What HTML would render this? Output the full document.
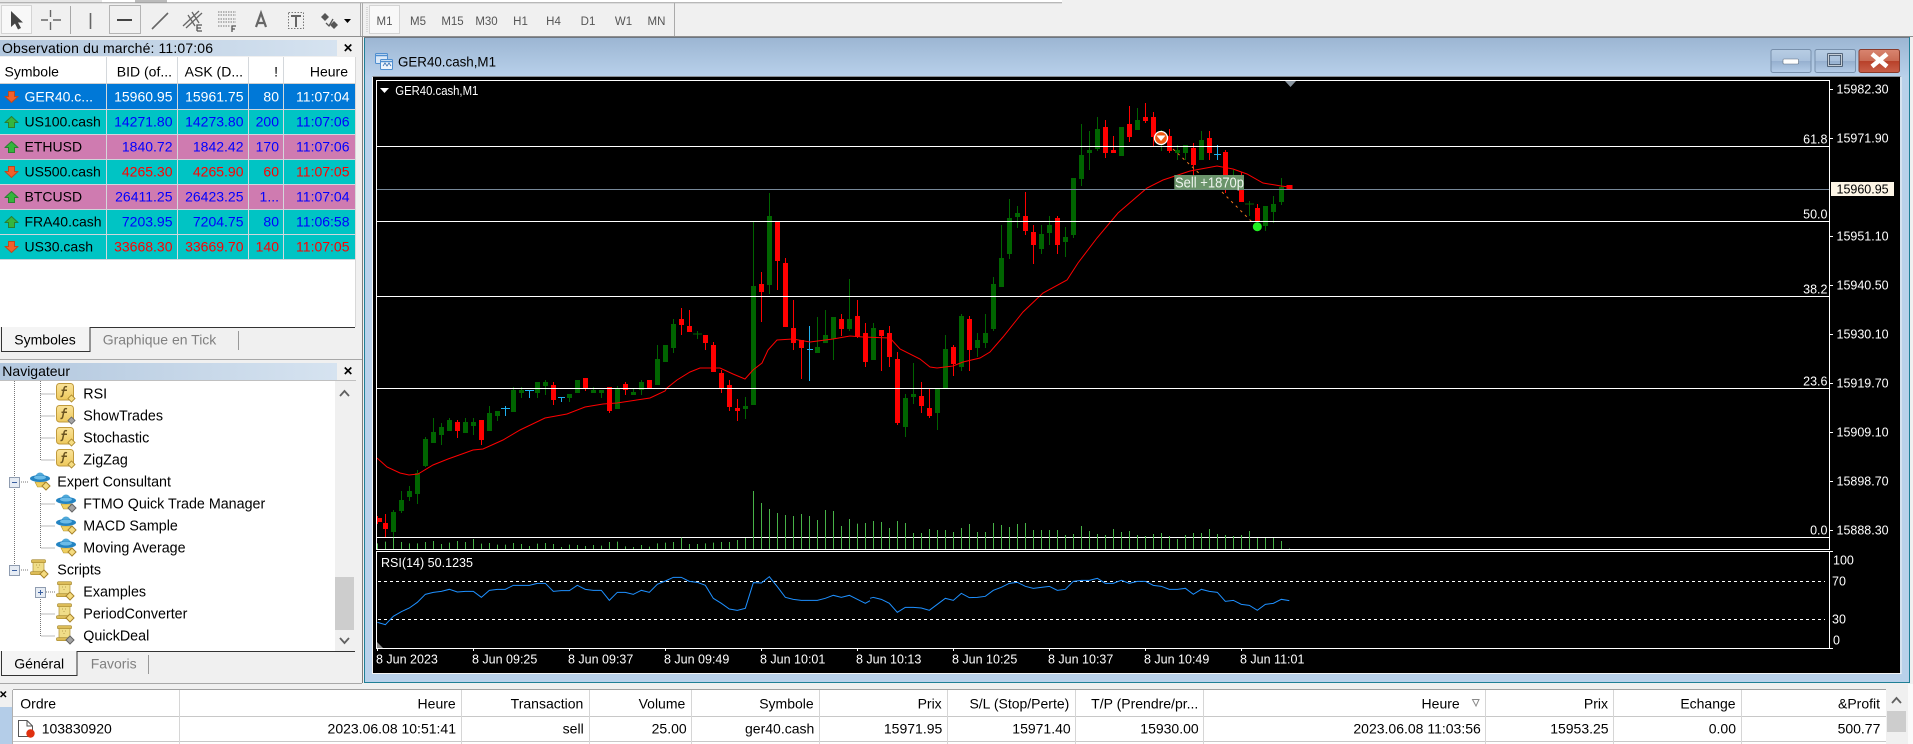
<!DOCTYPE html>
<html lang="fr"><head><meta charset="utf-8"><title>GER40.cash,M1</title>
<style>
html,body{margin:0;padding:0;width:1913px;height:744px;overflow:hidden;background:#f0f0f0}
svg{display:block;position:absolute;left:0;top:0}
text{font-family:"Liberation Sans",sans-serif;font-size:14px;fill:#000}
.r{text-anchor:end}.w{fill:#fff}.b{fill:#00f}.d{fill:#f00}
.g{fill:#808080}.p{font-size:11.5px;fill:#555;text-anchor:middle}
.c{font-size:12.5px;fill:#fff}.n{font-size:14.3px}
.v{vector-effect:non-scaling-stroke}
</style></head><body>
<svg width="1913" height="744" viewBox="0 0 1913 744" xmlns="http://www.w3.org/2000/svg">
<defs>
<linearGradient id="tb" x1="0" y1="0" x2="0" y2="1"><stop offset="0" stop-color="#9cb6d3"/><stop offset="1" stop-color="#b8d0ea"/></linearGradient>
<linearGradient id="cap" x1="0" y1="0" x2="1" y2="0"><stop offset="0" stop-color="#b2c7de"/><stop offset="1" stop-color="#d6e3f0"/></linearGradient>
<linearGradient id="btn" x1="0" y1="0" x2="0" y2="1"><stop offset="0" stop-color="#b8cde4"/><stop offset=".5" stop-color="#a9c1dc"/><stop offset=".51" stop-color="#96b0cf"/><stop offset="1" stop-color="#b5cde8"/></linearGradient>
<linearGradient id="cl" x1="0" y1="0" x2="0" y2="1"><stop offset="0" stop-color="#d98570"/><stop offset=".5" stop-color="#c96b54"/><stop offset=".51" stop-color="#b8412a"/><stop offset="1" stop-color="#c9604a"/></linearGradient>
<linearGradient id="gy" x1="0" y1="0" x2="0" y2="1"><stop offset="0" stop-color="#fae39a"/><stop offset="1" stop-color="#eec95c"/></linearGradient>
<symbol id="dm" viewBox="0 0 8 8" overflow="visible"><polygon points="4,0 8,4 4,8 0,4" fill="#f5dc80" stroke="#a8842a"/></symbol>
<symbol id="ua" viewBox="0 0 14 12"><polygon points="7,.5 13.5,6.500 10,6.500 10,11.500 4,11.500 4,6.500 .5,6.500" fill="#35b53c" stroke="#2a7f30"/></symbol>
<symbol id="da" viewBox="0 0 14 12"><polygon points="7,11.500 13.5,5.500 10,5.500 10,.5 4,.5 4,5.500 .5,5.500" fill="#f2602a" stroke="#bf481c"/></symbol>
<symbol id="fx" viewBox="0 0 20 19" overflow="visible"><rect x=".5" y=".5" width="17" height="16.500" rx="3" fill="url(#gy)" stroke="#c09a3c"/><path d="M11 3.800c-1.600-.6-2.600 0-2.900 1.500L6.700 11.800c-.3 1.400-1 1.900-2.200 1.600M5.500 7.200h5.500" fill="none" stroke="#6b5420" stroke-width="1.500"/></symbol>
<symbol id="ea" viewBox="0 0 21 19" overflow="visible"><path d="M5 11h10l-2.500 5h-5z" fill="#efcf60" stroke="#b39330" stroke-width=".6"/><path d="M5.500 6a4.500 4.500 0 0 1 9 0z" fill="#4fa8d8"/><ellipse cx="10" cy="7.500" rx="10" ry="3.500" fill="#2484c2"/><ellipse cx="10" cy="6.500" rx="6" ry="2" fill="#6cbce8"/></symbol>
<symbol id="sc" viewBox="0 0 19 19" overflow="visible"><rect x="3" y="2" width="11" height="12" fill="#f0dd88" stroke="#b0933a" stroke-width=".7"/><rect x="1.500" y=".7" width="14" height="3" rx="1" fill="#dcbc58" stroke="#a88a30" stroke-width=".7"/><rect x=".5" y="12.700" width="13" height="3" rx="1" fill="#dcbc58" stroke="#a88a30" stroke-width=".7"/><path d="M6 6h1M9 6h1M7.500 8.500h1" stroke="#b8a050"/></symbol>
</defs>

<!-- top strip and toolbar -->
<rect x="0" y="0" width="1062" height="2.500" fill="#fff"/>
<rect x="0" y="0" width="102" height="2.500" fill="#e6e6e6"/>
<rect x="135" y="0" width="32" height="2.500" fill="#bbb"/>
<path d="M0 2.800H1062" stroke="#a0a0a0"/><path d="M0 36.500H1913" stroke="#8f8f8f"/>
<g fill="none"><rect x="1.500" y="5.500" width="30" height="28" fill="#f8f8f8" stroke="#d4d4d4"/><rect x="109.500" y="5.500" width="31" height="28" stroke="#b4b4b4"/><rect x="369.500" y="5.500" width="30" height="28" fill="#f8f8f8" stroke="#d4d4d4"/></g>
<path d="M11 11V27l4-3.500 3 6 3-1.500-3-5.500h5z" fill="#444"/>
<path d="M41 20H48M53 20H61M50.500 10V17M50.500 22V30" stroke="#666" stroke-width="1.400" fill="none"/>
<path d="M70.500 6V34" stroke="#a8a8a8"/><path d="M90.500 13V29" stroke="#666" stroke-width="1.600"/>
<path d="M117 20H132" stroke="#444" stroke-width="2"/>
<path d="M152 29L168 13" stroke="#666" stroke-width="1.600"/>
<path d="M183 26L199 11M186 28L202 13M188 15L195 26M192 12L199 23" stroke="#666" stroke-width="1.300" fill="none"/><path d="M197 31V25H202M197 28H201M197 31H202" stroke="#555" stroke-width="1.300" fill="none"/>
<path d="M218 12H236M218 15H236M218 19H236M218 22H236M218 26H230" stroke="#777" stroke-width="1.100" stroke-dasharray="1.500 1" fill="none"/><path d="M232 32V26H236M232 29H235" stroke="#555" stroke-width="1.300" fill="none"/>
<path d="M256 27L261 13L266 27M258 23H264" stroke="#666" stroke-width="2.200" fill="none"/>
<rect x="288.500" y="12.500" width="15" height="16" fill="none" stroke="#777" stroke-dasharray="1.500 1.500"/><path d="M291 16H301M296 16V27" stroke="#666" stroke-width="2" fill="none"/>
<path d="M325 13l4 4-4 4-4-4zM334 21l4 4-4 4-4-4z" fill="#555"/><path d="M326 23l3 3 4-7" fill="none" stroke="#555" stroke-width="1.300"/>
<polygon points="344,19 351,19 347.500,23" fill="#000"/>
<path d="M360.500 3V36M362.500 3V36M674.500 3V36" stroke="#aaa"/>
<path d="M367 7V32" stroke="#bbb" stroke-dasharray="1 1"/>
<text class="p" x="384.500" y="25">M1</text><text class="p" x="418" y="25">M5</text><text class="p" x="452.500" y="25">M15</text><text class="p" x="486.500" y="25">M30</text><text class="p" x="520.500" y="25">H1</text><text class="p" x="553.500" y="25">H4</text><text class="p" x="588" y="25">D1</text><text class="p" x="623.500" y="25">W1</text><text class="p" x="656.500" y="25">MN</text>

<!-- left panels -->
<path d="M362.500 37V683" stroke="#7d7d7d"/>
<rect x="0" y="40" width="337" height="16" fill="url(#cap)"/>
<text x="2" y="53" textLength="211" lengthAdjust="spacing">Observation du marché: 11:07:06</text>
<path d="M344.800 44.500l6.500 6.500M351.300 44.500l-6.500 6.500" stroke="#000" stroke-width="1.600"/>
<rect x="0" y="57" width="355" height="270" fill="#fff"/>
<path d="M355.500 57V327" stroke="#d8d8d8"/>
<rect x="0" y="84" width="355" height="25.300" fill="#0078d7"/>
<rect x="0" y="109.300" width="355" height="25" fill="#00c4c4"/>
<rect x="0" y="134.300" width="355" height="25" fill="#cf7bb0"/>
<rect x="0" y="159.300" width="355" height="25" fill="#00c4c4"/>
<rect x="0" y="184.300" width="355" height="25" fill="#cf7bb0"/>
<rect x="0" y="209.300" width="355" height="50" fill="#00c4c4"/>
<path d="M0 109.500H355M0 134.500H355M0 159.500H355M0 184.500H355M0 209.500H355M0 234.500H355M0 259.500H355" stroke="#cfd6dc"/>
<path d="M106.500 57V259M177.500 57V259M248.500 57V259M283.500 57V259" stroke="#d4d8dc"/>
<path d="M0 83.500H355" stroke="#d0d0d0"/>
<text x="4.500" y="76.700">Symbole</text><text class="r" x="172" y="76.700">BID (of...</text><text class="r" x="243" y="76.700">ASK (D...</text><text class="r" x="278" y="76.700">!</text><text class="r" x="348" y="76.700">Heure</text>
<use href="#da" x="4.500" y="91" width="14" height="12"/><use href="#ua" x="4.500" y="116" width="14" height="12"/><use href="#ua" x="4.500" y="141" width="14" height="12"/><use href="#da" x="4.500" y="166" width="14" height="12"/><use href="#ua" x="4.500" y="191" width="14" height="12"/><use href="#ua" x="4.500" y="216" width="14" height="12"/><use href="#da" x="4.500" y="241" width="14" height="12"/>
<g class="rw">
<text class="w" x="24.500" y="101.700">GER40.c...</text><text class="r w" x="172.500" y="101.700">15960.95</text><text class="r w" x="243.500" y="101.700">15961.75</text><text class="r w" x="279" y="101.700">80</text><text class="r w" x="349.500" y="101.700">11:07:04</text>
<text x="24.500" y="126.700">US100.cash</text><text class="r b" x="172.500" y="126.700">14271.80</text><text class="r b" x="243.500" y="126.700">14273.80</text><text class="r b" x="279" y="126.700">200</text><text class="r b" x="349.500" y="126.700">11:07:06</text>
<text x="24.500" y="151.700">ETHUSD</text><text class="r b" x="172.500" y="151.700">1840.72</text><text class="r b" x="243.500" y="151.700">1842.42</text><text class="r b" x="279" y="151.700">170</text><text class="r b" x="349.500" y="151.700">11:07:06</text>
<text x="24.500" y="176.700">US500.cash</text><text class="r d" x="172.500" y="176.700">4265.30</text><text class="r d" x="243.500" y="176.700">4265.90</text><text class="r d" x="279" y="176.700">60</text><text class="r d" x="349.500" y="176.700">11:07:05</text>
<text x="24.500" y="201.700">BTCUSD</text><text class="r b" x="172.500" y="201.700">26411.25</text><text class="r b" x="243.500" y="201.700">26423.25</text><text class="r b" x="279" y="201.700">1...</text><text class="r b" x="349.500" y="201.700">11:07:04</text>
<text x="24.500" y="226.700">FRA40.cash</text><text class="r b" x="172.500" y="226.700">7203.95</text><text class="r b" x="243.500" y="226.700">7204.75</text><text class="r b" x="279" y="226.700">80</text><text class="r b" x="349.500" y="226.700">11:06:58</text>
<text x="24.500" y="251.700">US30.cash</text><text class="r d" x="172.500" y="251.700">33668.30</text><text class="r d" x="243.500" y="251.700">33669.70</text><text class="r d" x="279" y="251.700">140</text><text class="r d" x="349.500" y="251.700">11:07:05</text>
</g>
<path d="M90 327.500H355" stroke="#333"/><path d="M1.500 327V351.500H90V327" fill="#f4f4f4" stroke="#333"/>
<text x="14.300" y="344.300">Symboles</text><text class="g" x="102.700" y="344.300">Graphique en Tick</text>
<path d="M238.500 331V350" stroke="#999"/>
<path d="M0 359.500H362" stroke="#a8a8a8"/>
<rect x="0" y="363" width="337" height="17" fill="url(#cap)"/><path d="M0 380.500H356" stroke="#c0c0c0"/>
<text x="2.300" y="376">Navigateur</text>
<path d="M344.800 367.500l6.500 6.500M351.300 367.500l-6.500 6.500" stroke="#000" stroke-width="1.600"/>
<rect x="0" y="381" width="335" height="270" fill="#fff"/>
<rect x="335" y="381" width="19" height="270" fill="#f0f0f0"/>
<rect x="335" y="577" width="19" height="53" fill="#cdcdcd"/>
<path d="M340 396l4.500-5 4.500 5M340 638l4.500 5 4.500-5" fill="none" stroke="#606060" stroke-width="1.800"/>
<path d="M14.500 381V565M40.500 381V460H55M40.500 394H55M40.500 416H55M40.500 438H55M19 482H29M40.500 493V548H55M40.500 504H55M40.500 526H55M19 570H29M46 592H55M40.500 597V636H55M40.500 614H55" stroke="#777" stroke-dasharray="1 1" fill="none"/>
<g fill="#e6ecf4" stroke="#8f9cb0"><rect x="9.500" y="477.500" width="10" height="10"/><rect x="9.500" y="565.500" width="10" height="10"/><rect x="35.500" y="587.500" width="10" height="10"/></g>
<path d="M12 482.500h5M12 570.500h5M38 592.500h5M40.500 590v5" stroke="#3a5fa0"/>
<use href="#fx" x="56" y="383" width="20" height="19"/><use href="#dm" x="68" y="395" width="7" height="7"/>
<use href="#fx" x="56" y="405" width="20" height="19"/><use href="#dm" x="68" y="417" width="7" height="7" style="filter:grayscale(1) brightness(.75)"/>
<use href="#fx" x="56" y="427" width="20" height="19"/><use href="#dm" x="68" y="439" width="7" height="7"/>
<use href="#fx" x="56" y="449" width="20" height="19"/><use href="#dm" x="68" y="461" width="7" height="7"/>
<use href="#ea" x="30" y="471" width="21" height="19"/><use href="#dm" x="42" y="482" width="8" height="8"/>
<use href="#ea" x="56" y="493" width="21" height="19"/><use href="#dm" x="68" y="504" width="8" height="8" style="filter:grayscale(1) brightness(.75)"/>
<use href="#ea" x="56" y="515" width="21" height="19"/><use href="#dm" x="68" y="526" width="8" height="8"/>
<use href="#ea" x="56" y="537" width="21" height="19"/><use href="#dm" x="68" y="548" width="8" height="8"/>
<use href="#sc" x="30" y="559" width="19" height="19"/><use href="#dm" x="40" y="570" width="8" height="8"/>
<use href="#sc" x="56" y="581" width="19" height="19"/><use href="#dm" x="66" y="592" width="8" height="8"/>
<use href="#sc" x="56" y="603" width="19" height="19"/><use href="#dm" x="66" y="614" width="8" height="8"/>
<use href="#sc" x="56" y="625" width="19" height="19"/><use href="#dm" x="66" y="636" width="8" height="8" style="filter:grayscale(1) brightness(.75)"/>
<g class="nv">
<text class="n" x="83.300" y="398.300">RSI</text><text class="n" x="83.300" y="420.700">ShowTrades</text><text class="n" x="83.300" y="442.700">Stochastic</text><text class="n" x="83.300" y="464.700">ZigZag</text>
<text class="n" x="57.300" y="486.700">Expert Consultant</text>
<text class="n" x="83.300" y="508.700">FTMO Quick Trade Manager</text><text class="n" x="83.300" y="530.700">MACD Sample</text><text class="n" x="83.300" y="552.700">Moving Average</text>
<text class="n" x="57.300" y="574.700">Scripts</text>
<text class="n" x="83.300" y="596.700">Examples</text><text class="n" x="83.300" y="618.700">PeriodConverter</text><text class="n" x="83.300" y="640.700">QuickDeal</text>
</g>
<path d="M77 651.500H355" stroke="#333"/><path d="M1.500 651V675.500H77V651" fill="#f4f4f4" stroke="#333"/>
<text x="14.300" y="668.700">Général</text><text class="g" x="90.700" y="668.700">Favoris</text>
<path d="M148.500 655V674" stroke="#999"/>
<path d="M0 683.500H362" stroke="#a8a8a8"/>

<!-- MDI chart window -->
<rect x="365" y="38" width="1544" height="644" fill="#b9d1ea"/>
<rect x="365" y="38" width="1544" height="38" fill="url(#tb)"/>
<path d="M364.500 37.500V682.500H1909.500V37" fill="none" stroke="#1f7f96"/>
<path d="M364 37.500H1909" stroke="#6d7680"/>
<path d="M372.500 76.500H1900.500" stroke="#8a8f95"/>
<rect x="373" y="77" width="1527" height="596" fill="#000"/>
<path d="M372.500 77V673.500H1901V77" fill="none" stroke="#f4f4f4"/>
<g><rect x="375.500" y="53.500" width="12" height="10" rx="1" fill="#dbe9f8" stroke="#4f8fd0"/><rect x="380.500" y="59.500" width="12" height="10" rx="1" fill="#eef5fc" stroke="#4f8fd0"/><path d="M376 55.500H387M381 61.500H392" stroke="#4f8fd0" stroke-width="1.500"/><path d="M383 66l2-3 2 3 2-3 2 3" fill="none" stroke="#3a70b0" stroke-width=".8"/></g>
<text x="398" y="66.700" textLength="98" lengthAdjust="spacingAndGlyphs">GER40.cash,M1</text>
<g stroke="#7890ac"><rect x="1771" y="49.500" width="40" height="23" rx="2" fill="url(#btn)"/><rect x="1815" y="49.500" width="40.500" height="23" rx="2" fill="url(#btn)"/><rect x="1859" y="49.500" width="40.500" height="23" rx="2" fill="url(#cl)" stroke="#8a3a2a"/></g>
<rect x="1783" y="59" width="15.500" height="5" rx="1" fill="#fff" stroke="#5f6f80" stroke-width=".6"/>
<rect x="1828.500" y="54.500" width="13" height="11" fill="none" stroke="#36465a" stroke-width="2.500"/><rect x="1828.500" y="54.500" width="13" height="11" fill="none" stroke="#e8eef4" stroke-width=".8"/>
<path d="M1872 54l15 12.500M1887 54l-15 12.500" stroke="#fff" stroke-width="4.500"/>

<!-- candles -->
<path fill="none" stroke="#006400" d="M393.500 510V537M401.500 491V513M409.500 486V501M417.500 470V504M425.500 437V467M433.500 418V443M441.500 423V445M449.500 418V431M465.500 418V433M473.500 418V435M489.500 406V431M497.500 411V421M513.500 387V412M521.500 387V398M537.500 382V398M545.500 380V395M569.500 394V402M593.500 387V393M601.500 390V398M617.500 386V409M633.500 389V395M641.500 380V395M657.500 345V385M673.500 319V353M697.500 331V339M745.500 397V419M753.500 222V405M769.500 193V294M817.500 317V353M825.500 310V343M833.500 317V360M849.500 279V331M873.500 323V360M905.500 394V437M913.500 363V404M937.500 389V430M945.500 335V388M961.500 314V371M977.500 333V357M985.500 314V348M993.500 277V331M1001.500 225V287M1009.500 199V259M1017.500 206V228M1041.500 225V254M1049.500 216V245M1065.500 227V257M1073.500 178V238M1081.500 124V186M1089.500 131V170M1097.500 117V151M1137.500 108V130M1161.500 130V151M1177.500 145V160M1185.500 145V160M1201.500 131V160M1233.500 170V190M1249.500 201V216M1265.500 206V231M1273.500 196V223M1281.500 178V205M1245 204H1254M693 334H702"/>
<path fill="none" stroke="#006400" stroke-width="5" d="M393.500 512V532M401.500 500V511M409.500 491V497M417.500 473V494M425.500 439V466M433.500 432V443M441.500 427V435M449.500 420V431M465.500 422V433M473.500 422V426M489.500 413V431M497.500 411V416M513.500 390V412M521.500 390V393M537.500 382V393M545.500 382V386M569.500 394V398M577.500 380V393M593.500 390V393M601.500 390V393M617.500 388V409M633.500 392V395M641.500 382V390M657.500 359V385M665.500 345V362M673.500 324V348M745.500 406V409M753.500 286V405M769.500 216V285M817.500 347V353M825.500 335V343M833.500 317V339M849.500 319V329M873.500 328V360M905.500 398V427M913.500 394V397M937.500 389V413M945.500 349V388M961.500 316V367M977.500 340V348M985.500 333V343M993.500 284V329M1001.500 258V287M1009.500 218V254M1017.500 213V217M1041.500 234V249M1049.500 225V233M1065.500 237V242M1073.500 178V235M1081.500 155V179M1089.500 150V153M1097.500 129V149M1121.500 127V156M1137.500 120V130M1177.500 150V153M1185.500 145V153M1201.500 140V160M1233.500 175V185M1265.500 206V226M1273.500 204V212M1281.500 187V202"/>
<path fill="none" stroke="#f00" d="M377.500 516V524M385.500 514V537M457.500 420V438M481.500 420V445M553.500 382V405M585.500 378V391M609.500 387V413M625.500 382V395M681.500 308V335M689.500 310V332M705.500 335V350M713.500 342V372M721.500 370V393M729.500 380V411M737.500 399V421M761.500 272V322M777.500 222V290M785.500 258V327M793.500 300V350M801.500 340V379M841.500 314V336M857.500 300V338M865.500 323V367M881.500 330V371M889.500 326V367M897.500 352V425M921.500 382V413M929.500 389V418M953.500 345V376M969.500 316V371M1025.500 192V235M1033.500 225V264M1057.500 216V254M1105.500 120V158M1113.500 136V153M1129.500 106V142M1145.500 103V123M1153.500 112V146M1169.500 129V153M1193.500 143V175M1209.500 131V160M1225.500 150V193M1241.500 172V202M1257.500 204V222"/>
<path fill="none" stroke="#f00" stroke-width="5" d="M379.500 518V522M385.500 523V529M457.500 422V431M481.500 420V440M553.500 385V400M585.500 378V388M609.500 387V411M625.500 384V390M649.500 380V388M681.500 319V325M689.500 326V332M705.500 335V343M713.500 345V372M721.500 373V388M729.500 385V407M737.500 408V411M761.500 284V292M777.500 222V261M785.500 263V327M793.500 328V343M801.500 340V348M841.500 319V329M857.500 316V337M865.500 333V362M881.500 330V336M889.500 333V357M897.500 359V423M921.500 396V406M929.500 408V416M953.500 347V364M969.500 319V350M1025.500 216V231M1033.500 232V245M1057.500 218V245M1105.500 127V153M1113.500 150V153M1129.500 124V137M1145.500 117V121M1153.500 117V137M1169.500 136V151M1193.500 148V165M1209.500 138V153M1225.500 152V177M1241.500 190V202M1257.500 208V222"/>
<rect x="1286.500" y="185" width="6" height="5" fill="#f00"/>
<path fill="none" stroke="#1fb0ee" d="M505.500 406V416M501 408.500H510M529.500 390V398M525 390.500H534M561.500 397V402M558 397.500H565M809.500 326V381M807 349.500H813M1217.500 145V160M1214 154.500H1221"/>
<path fill="none" stroke="#f07820" stroke-dasharray="2.500 4" d="M1173 149L1203 177M1222 192L1252 222"/>

<!-- moving average -->
<polyline fill="none" stroke="#f00" points="377,458 387,467 400,473 409,475 418,474 433,465 448,459 462,454 473,450 483,449 503,440 520,430 545,418 567,414 585,407 603,404 617,403 650,398 665,391 667,388 677,380 690,372 700,368 720,368 733,374 745,379 753,370 762,363 768,350 777,340 793,339 810,342 833,339 850,336 863,337 890,338 900,349 920,359 930,367 937,368 953,366 963,362 980,358 990,352 1003,337 1023,312 1043,293 1067,280 1078,263 1097,238 1118,213 1147,188 1163,180 1190,171 1217,166 1233,169 1247,174 1263,183 1281,186 1289,187"/>

<!-- fib and price lines -->
<path d="M377 146.500H1829M377 221.500H1829M377 296.500H1829M377 388.500H1829M377 537.500H1829" stroke="#fff"/>
<path d="M377 189.500H1829" stroke="#778899"/>

<!-- volumes -->
<g transform="translate(370.170 390) scale(.33333)"><path class="v" fill="none" stroke="#47b247" d="M22 478V460M46 478V455M70 478V443M94 478V456M118 478V460M142 478V460M166 478V456M190 478V453M214 478V462M238 478V458M262 478V453M286 478V456M310 478V447M334 478V461M358 478V459M382 478V464M406 478V464M430 478V459M454 478V462M478 478V468M502 478V461M526 478V459M550 478V462M574 478V471M598 478V464M622 478V465M646 478V468M670 478V465M694 478V467M718 478V456M742 478V455M766 478V469M790 478V471M814 478V465M838 478V470M862 478V460M886 478V458M910 478V456M934 478V443M958 478V462M982 478V462M1006 478V460M1030 478V458M1054 478V456M1078 478V456M1102 478V450M1126 478V444M1150 478V303M1174 478V339M1198 478V357M1222 478V369M1246 478V375M1270 478V378M1294 478V372M1318 478V378M1342 478V390M1366 478V360M1390 478V363M1414 478V408M1438 478V387M1462 478V401M1486 478V399"/></g>
<g transform="translate(870.170 390) scale(.33333)"><path class="v" fill="none" stroke="#47b247" d="M10 478V393M34 478V396M58 478V414M82 478V393M106 478V399M130 478V429M154 478V429M178 478V417M202 478V420M226 478V420M250 478V426M274 478V414M298 478V402M322 478V426M346 478V426M370 478V399M394 478V405M418 478V411M442 478V402M466 478V399M490 478V420M514 478V420M538 478V420M562 478V420M586 478V435M610 478V432M634 478V408M658 478V423M682 478V432M706 478V435M730 478V417M754 478V426M778 478V423M802 478V435M826 478V438M850 478V432M874 478V429M898 478V438M922 478V447M946 478V435M970 478V429M994 478V429M1018 478V417M1042 478V432M1066 478V435M1090 478V438M1114 478V435M1138 478V423M1162 478V444M1186 478V444M1210 478V444M1234 478V453M1258 478V475"/></g>

<!-- chart frames -->
<rect x="376.500" y="80.500" width="1453" height="469" fill="none" stroke="#fff"/>
<rect x="376.500" y="551.500" width="1453" height="97" fill="none" stroke="#fff"/>
<polygon points="1285,81 1296,81 1290.500,87" fill="#8a95a0"/>
<polygon points="380,88 389,88 384.500,93" fill="#fff"/>
<text class="c" x="395.300" y="95" textLength="83" lengthAdjust="spacingAndGlyphs">GER40.cash,M1</text>

<!-- RSI -->
<path d="M378 581.500H1825M378 619.500H1825" stroke="#fff" stroke-dasharray="3 3"/>
<polygon points="377,648 383,648 377,642" fill="#888"/>
<text class="c" x="381" y="567" textLength="92" lengthAdjust="spacingAndGlyphs">RSI(14) 50.1235</text>
<g transform="translate(370 390) scale(.33333)"><polyline class="v" fill="none" stroke="#1e90ff" points="22,697 46,704 70,679 94,665 118,654 142,637 166,613 190,607 214,604 238,598 262,606 286,604 310,604 334,622 358,601 382,598 406,598 430,586 454,586 478,586 502,580 526,580 550,604 574,602 598,602 622,586 646,598 670,601 694,601 718,631 742,607 766,607 790,613 814,601 838,607 862,583 886,573 910,562 934,562 958,574 982,577 1006,586 1030,625 1054,640 1078,657 1102,661 1126,655 1150,578 1174,579 1198,560 1222,590 1246,622 1270,628 1294,631 1318,631 1342,631 1366,625 1390,616 1414,622 1438,616 1462,628 1486,640 1500,632"/></g>
<g transform="translate(870 390) scale(.33333)"><polyline class="v" fill="none" stroke="#1e90ff" points="0,625 10,622 34,628 58,640 82,667 106,652 130,652 154,654 178,661 202,643 226,625 250,631 274,610 298,623 322,622 346,619 370,601 394,592 418,580 442,577 466,589 490,595 514,592 538,589 562,601 586,598 610,574 634,571 658,571 682,565 706,580 730,580 754,571 778,580 802,574 826,574 850,586 874,589 898,598 922,598 946,595 970,613 994,598 1018,604 1042,607 1066,634 1090,631 1114,643 1138,646 1162,661 1186,643 1210,640 1234,628 1258,632"/></g>

<!-- trade markers -->
<circle cx="1161" cy="138" r="6.500" fill="#f05a14" stroke="#fff" stroke-width="1.300"/>
<polygon points="1156.500,135.500 1165.500,135.500 1161,141" fill="#fff"/>
<circle cx="1257.300" cy="226.700" r="4.500" fill="#22ee22"/>
<rect x="1174.300" y="175" width="69.700" height="14.700" fill="#6b946b"/>
<text x="1175" y="187.300" style="font-size:14.500px;fill:#eef4ee" textLength="69" lengthAdjust="spacingAndGlyphs">Sell +1870p</text>

<!-- axis -->
<path d="M1830 89.500h3M1830 138.500h3M1830 236.500h3M1830 285.500h3M1830 334.500h3M1830 383.500h3M1830 432.500h3M1830 481.500h3M1830 530.500h3M1830 551.500h3M1830 648.500h3" stroke="#fff"/>
<path d="M377.500 648V651M473.500 648V651M569.500 648V651M665.500 648V651M761.500 648V651M857.500 648V651M953.500 648V651M1049.500 648V651M1145.500 648V651M1241.500 648V651" stroke="#fff"/>
<rect x="1831" y="182" width="63" height="14" fill="#fdf5e6"/>
<text class="c" x="1836.500" y="93.700">15982.30</text><text class="c" x="1836.500" y="142.700">15971.90</text><text class="c" x="1836.500" y="193.500" style="fill:#000">15960.95</text><text class="c" x="1836.500" y="240.700">15951.10</text><text class="c" x="1836.500" y="289.700">15940.50</text><text class="c" x="1836.500" y="338.700">15930.10</text><text class="c" x="1836.500" y="387.700">15919.70</text><text class="c" x="1836.500" y="436.700">15909.10</text><text class="c" x="1836.500" y="485.700">15898.70</text><text class="c" x="1836.500" y="534.700">15888.30</text>
<text class="c r" x="1827.500" y="143.700">61.8</text><text class="c r" x="1827.500" y="218.700">50.0</text><text class="c r" x="1827.500" y="293.700">38.2</text><text class="c r" x="1827.500" y="385.500">23.6</text><text class="c r" x="1827.500" y="534.700">0.0</text>
<text class="c" x="1833" y="564.700">100</text><text class="c" x="1832" y="585.700">70</text><text class="c" x="1832" y="623.700">30</text><text class="c" x="1833" y="644.700">0</text>
<text class="c" x="376" y="663.700">8 Jun 2023</text><text class="c" x="472" y="663.700">8 Jun 09:25</text><text class="c" x="568" y="663.700">8 Jun 09:37</text><text class="c" x="664" y="663.700">8 Jun 09:49</text><text class="c" x="760" y="663.700">8 Jun 10:01</text><text class="c" x="856" y="663.700">8 Jun 10:13</text><text class="c" x="952" y="663.700">8 Jun 10:25</text><text class="c" x="1048" y="663.700">8 Jun 10:37</text><text class="c" x="1144" y="663.700">8 Jun 10:49</text><text class="c" x="1240" y="663.700">8 Jun 11:01</text>

<!-- terminal table -->
<path d="M0.500 691.500l5.500 5.500M6 691.500l-5.500 5.500" stroke="#000" stroke-width="1.500"/>
<rect x="0" y="707" width="12" height="37" fill="#b4cde8"/>
<rect x="13" y="690" width="1873" height="54" fill="#fff"/>
<path d="M13 689.500H1886" stroke="#a0a0a0"/><path d="M12.500 690V744" stroke="#b0b0b0"/>
<path d="M13 716.500H1886M13 741.500H1886" stroke="#c8c8c8"/>
<path d="M179.500 690V744M461.500 690V744M589.500 690V744M691.500 690V744M819.500 690V744M947.500 690V744M1075.500 690V744M1203.500 690V744M1485.500 690V744M1613.500 690V744M1741.500 690V744" stroke="#d6d6d6"/>
<text x="20.300" y="708.300">Ordre</text><text class="r" x="455.700" y="708.300">Heure</text><text class="r" x="583.300" y="708.300">Transaction</text><text class="r" x="685.300" y="708.300">Volume</text><text class="r" x="813.700" y="708.300">Symbole</text><text class="r" x="941.700" y="708.300">Prix</text><text class="r" x="1069.300" y="708.300">S/L (Stop/Perte)</text><text class="r" x="1198.300" y="708.300">T/P (Prendre/pr...</text><text class="r" x="1459.700" y="708.300">Heure</text><text class="r" x="1608" y="708.300">Prix</text><text class="r" x="1735.600" y="708.300">Echange</text><text class="r" x="1880" y="708.300">&amp;Profit</text>
<polygon points="1472.500,699.500 1479,699.500 1476,706" fill="none" stroke="#8a8a8a"/>
<path d="M18.500 720.500H27l5.500 5.500V736.500H18.500z" fill="#fff" stroke="#555"/><path d="M27 720.500V726H32.500" fill="none" stroke="#555"/><circle cx="30.500" cy="733.500" r="4.200" fill="#e0300f"/>
<text x="41.700" y="733.700">103830920</text><text class="r" x="456" y="733.700">2023.06.08 10:51:41</text><text class="r" x="583.700" y="733.700">sell</text><text class="r" x="686.700" y="733.700">25.00</text><text class="r" x="814.300" y="733.700">ger40.cash</text><text class="r" x="942.300" y="733.700">15971.95</text><text class="r" x="1070.700" y="733.700">15971.40</text><text class="r" x="1198.700" y="733.700">15930.00</text><text class="r" x="1480.800" y="733.700">2023.06.08 11:03:56</text><text class="r" x="1608.600" y="733.700">15953.25</text><text class="r" x="1736" y="733.700">0.00</text><text class="r" x="1880.400" y="733.700">500.77</text>
<rect x="1887" y="690" width="19" height="54" fill="#f0f0f0"/>
<rect x="1887" y="711" width="19" height="21" fill="#cdcdcd"/>
<path d="M1892 703l4.500-5 4.500 5" fill="none" stroke="#606060" stroke-width="1.800"/>
<rect x="1908" y="684" width="5" height="60" fill="#fafafa"/>
</svg>
</body></html>
